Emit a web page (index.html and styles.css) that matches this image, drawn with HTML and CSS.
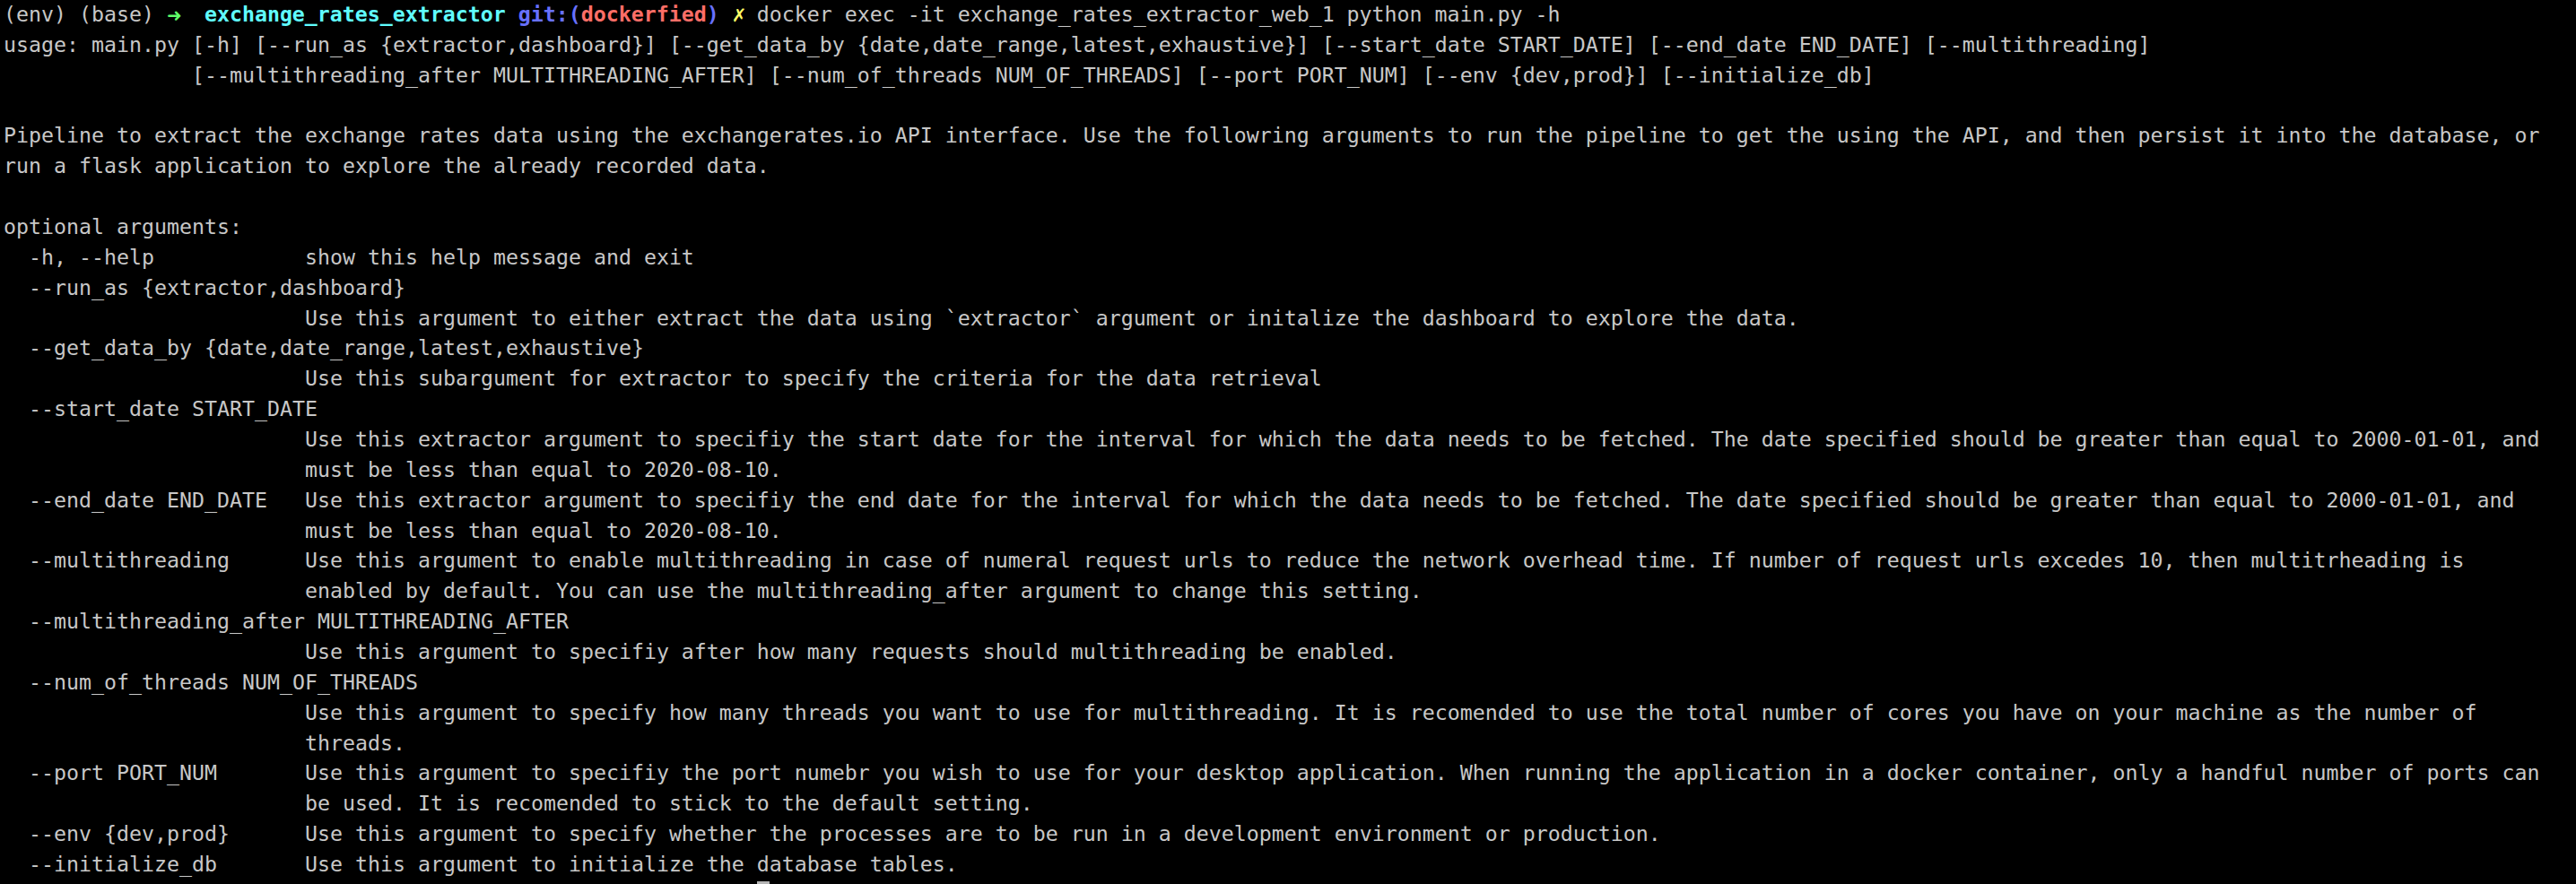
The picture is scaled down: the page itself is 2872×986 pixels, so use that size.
FILE: index.html
```html
<!DOCTYPE html>
<html lang="en">
<head>
<meta charset="utf-8">
<title>Terminal</title>
<link rel="stylesheet" href="styles.css">
</head>
<body>
<main class="terminal">
<pre class="screen">(env) (base) <span class="glyph p-green">➜</span>  <span class="p-cyan">exchange_rates_extractor</span> <span class="p-blue">git:(</span><span class="p-red">dockerfied</span><span class="p-blue">)</span> <span class="glyph p-yellow">✗</span> docker exec -it exchange_rates_extractor_web_1 python main.py -h
usage: main.py [-h] [--run_as {extractor,dashboard}] [--get_data_by {date,date_range,latest,exhaustive}] [--start_date START_DATE] [--end_date END_DATE] [--multithreading]
               [--multithreading_after MULTITHREADING_AFTER] [--num_of_threads NUM_OF_THREADS] [--port PORT_NUM] [--env {dev,prod}] [--initialize_db]

Pipeline to extract the exchange rates data using the exchangerates.io API interface. Use the followring arguments to run the pipeline to get the using the API, and then persist it into the database, or
run a flask application to explore the already recorded data.

optional arguments:
  -h, --help            show this help message and exit
  --run_as {extractor,dashboard}
                        Use this argument to either extract the data using `extractor` argument or initalize the dashboard to explore the data.
  --get_data_by {date,date_range,latest,exhaustive}
                        Use this subargument for extractor to specify the criteria for the data retrieval
  --start_date START_DATE
                        Use this extractor argument to specifiy the start date for the interval for which the data needs to be fetched. The date specified should be greater than equal to 2000-01-01, and
                        must be less than equal to 2020-08-10.
  --end_date END_DATE   Use this extractor argument to specifiy the end date for the interval for which the data needs to be fetched. The date specified should be greater than equal to 2000-01-01, and
                        must be less than equal to 2020-08-10.
  --multithreading      Use this argument to enable multithreading in case of numeral request urls to reduce the network overhead time. If number of request urls excedes 10, then multitrheading is
                        enabled by default. You can use the multithreading_after argument to change this setting.
  --multithreading_after MULTITHREADING_AFTER
                        Use this argument to specifiy after how many requests should multithreading be enabled.
  --num_of_threads NUM_OF_THREADS
                        Use this argument to specify how many threads you want to use for multithreading. It is recomended to use the total number of cores you have on your machine as the number of
                        threads.
  --port PORT_NUM       Use this argument to specifiy the port numebr you wish to use for your desktop application. When running the application in a docker container, only a handful number of ports can
                        be used. It is recomended to stick to the default setting.
  --env {dev,prod}      Use this argument to specify whether the processes are to be run in a development environment or production.
  --initialize_db       Use this argument to initialize the database tables.
                                                            <span class="cursor"> </span></pre>
</main>
</body>
</html>
```

FILE: styles.css
```css
html, body {
  margin: 0;
  padding: 0;
  background: #000000;
  overflow: hidden;
}

.terminal {
  width: 2872px;
  height: 986px;
  overflow: hidden;
  background: #000000;
  padding: 0 0 0 4px;
  box-sizing: border-box;
}

.screen {
  margin: -1px 0 0 0;
  font-family: "DejaVu Sans Mono", "Liberation Mono", monospace;
  font-size: 23.25px;
  line-height: 33.86px;
  color: #c7c7c7;
  white-space: pre;
}

.glyph {
  display: inline-block;
  width: 1ch;
  text-align: center;
  font-family: "DejaVu Sans", "DejaVu Sans Mono", sans-serif;
  font-size: 20px;
  line-height: 1;
}

.p-green { color: #5ffa68; font-weight: bold; }
.p-cyan { color: #60fdff; font-weight: bold; }
.p-blue { color: #6871ff; font-weight: bold; }
.p-red { color: #ff6e67; font-weight: bold; }
.p-yellow { color: #fffc67; font-weight: bold; }

.cursor {
  display: inline-block;
  width: 1ch;
  height: 30px;
  background: #b5b5b5;
  vertical-align: top;
  margin-top: 2px;
}
```
